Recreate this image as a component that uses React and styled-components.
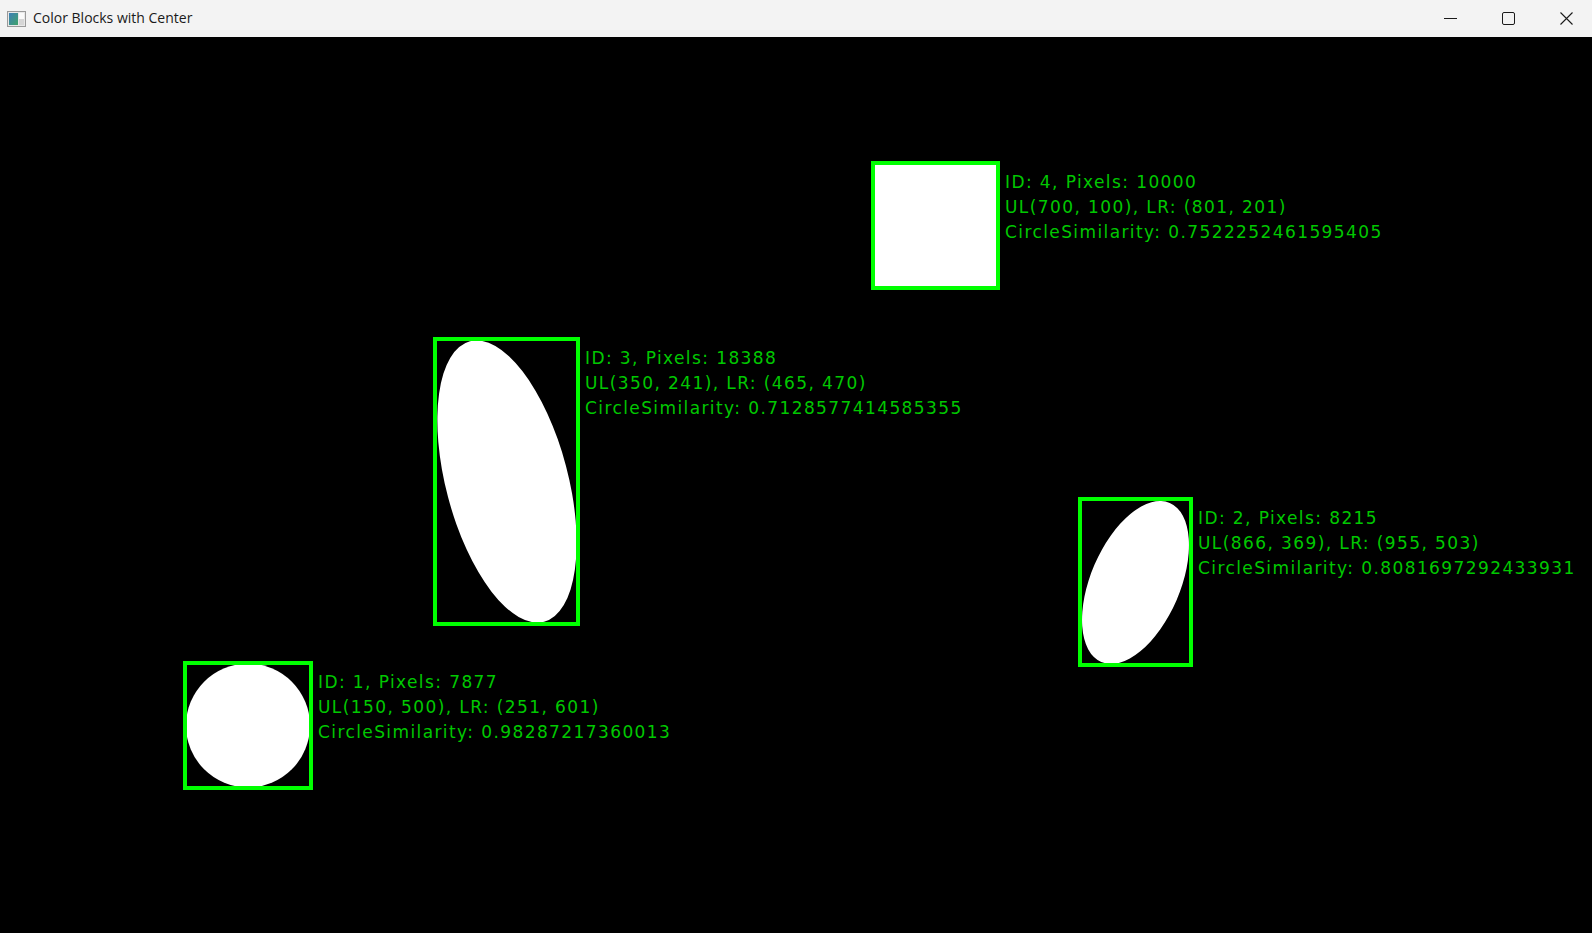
import React from 'react';
import styled, { createGlobalStyle } from 'styled-components';

const GlobalStyle = createGlobalStyle`
  html, body {
    margin: 0;
    padding: 0;
    background: #000;
  }
  #root {
    height: 100vh;
  }
`;

const Window = styled.div`
  display: flex;
  flex-direction: column;
  width: 100vw;
  height: 100vh;
  overflow: hidden;
`;

const TitleBar = styled.div`
  display: flex;
  align-items: center;
  height: 37px;
  flex: 0 0 37px;
  background: #f3f3f3;
  font-family: "Segoe UI", "Open Sans", "Noto Sans", sans-serif;
  font-size: 14px;
  color: #1a1a1a;
`;

const AppIcon = styled.svg`
  margin-left: 7px;
  margin-right: 7px;
  margin-top: 1px;
`;

const Title = styled.span`
  flex: 1;
  padding-bottom: 2px;
`;

const Controls = styled.div`
  display: flex;
  height: 100%;
`;

const ControlButton = styled.div`
  display: flex;
  align-items: center;
  justify-content: center;
  width: ${p => p.$w || 58}px;
  height: 100%;
  padding-left: ${p => p.$shift || 0}px;
  box-sizing: border-box;
`;

const Canvas = styled.div`
  position: relative;
  flex: 1;
  background: #000;
`;

// blob frame: bounding box drawn over the shape, like cv2.rectangle after the fill
const Frame = styled.div`
  position: absolute;
  left: ${p => p.$x}px;
  top: ${p => p.$y}px;
  width: ${p => p.$w}px;
  height: ${p => p.$h}px;
  background: ${p => (p.$filled ? '#fff' : '#000')};

  &::after {
    content: '';
    position: absolute;
    inset: 0;
    border: 4px solid #00ff00;
  }
`;

const Shape = styled.svg`
  position: absolute;
  left: 0;
  top: 0;
`;

const Label = styled.div`
  position: absolute;
  left: calc(100% + 5px);
  top: 9px;
  font-family: "DejaVu Sans", "Liberation Sans", sans-serif;
  font-size: 17px;
  line-height: 25px;
  letter-spacing: 1.4px;
  color: rgb(0, 200, 0);
  white-space: nowrap;
`;

const blobs = [
  {
    id: 4, pixels: 10000, ul: [700, 100], lr: [801, 201], sim: '0.7522252461595405',
    x: 871, y: 124, w: 129, h: 129, kind: 'square',
  },
  {
    id: 3, pixels: 18388, ul: [350, 241], lr: [465, 470], sim: '0.7128577414585355',
    x: 433, y: 300, w: 147, h: 289, kind: 'ellipse',
    cx: 74, cy: 144.5, rx: 61, ry: 145, rot: -14.8,
  },
  {
    id: 2, pixels: 8215, ul: [866, 369], lr: [955, 503], sim: '0.8081697292433931',
    x: 1078, y: 460, w: 115, h: 170, kind: 'ellipse',
    cx: 57.5, cy: 85.5, rx: 44.7, ry: 86.6, rot: 23.3,
  },
  {
    id: 1, pixels: 7877, ul: [150, 500], lr: [251, 601], sim: '0.98287217360013',
    x: 183, y: 624, w: 130, h: 129, kind: 'ellipse',
    cx: 65, cy: 64.5, rx: 62, ry: 62, rot: 0,
  },
];

const Blob = ({ b }) => (
  <Frame $x={b.x} $y={b.y} $w={b.w} $h={b.h} $filled={b.kind === 'square'}>
    {b.kind === 'ellipse' && (
      <Shape width={b.w} height={b.h} viewBox={`0 0 ${b.w} ${b.h}`}>
        <ellipse
          cx={b.cx}
          cy={b.cy}
          rx={b.rx}
          ry={b.ry}
          fill="#fff"
          transform={`rotate(${b.rot} ${b.cx} ${b.cy})`}
        />
      </Shape>
    )}
    <Label>
      <div>ID: {b.id}, Pixels: {b.pixels}</div>
      <div>UL({b.ul[0]}, {b.ul[1]}), LR: ({b.lr[0]}, {b.lr[1]})</div>
      <div>CircleSimilarity: {b.sim}</div>
    </Label>
  </Frame>
);

const App = () => {
  return (
    <>
      <GlobalStyle />
      <Window>
        <TitleBar>
          <AppIcon width="19" height="16" viewBox="0 0 19 16">
            <defs>
              <linearGradient id="ico" x1="0" y1="0" x2="1" y2="1">
                <stop offset="0" stopColor="#3f7fb8" />
                <stop offset="1" stopColor="#3fa36a" />
              </linearGradient>
            </defs>
            <rect x="0.5" y="0.5" width="18" height="15" fill="#e8e8e8" stroke="#9a9a9a" />
            <rect x="2" y="2" width="9" height="12" fill="url(#ico)" />
            <rect x="12" y="2" width="5" height="6" fill="#fafafa" />
            <rect x="12" y="8" width="5" height="6" fill="#d6d6d6" />
          </AppIcon>
          <Title>Color Blocks with Center</Title>
          <Controls>
            <ControlButton>
              <svg width="13" height="13" viewBox="0 0 13 13">
                <line x1="0" y1="6.5" x2="13" y2="6.5" stroke="#1a1a1a" strokeWidth="1" />
              </svg>
            </ControlButton>
            <ControlButton>
              <svg width="13" height="13" viewBox="0 0 13 13">
                <rect x="0.5" y="0.5" width="12" height="12" rx="1.5" fill="none" stroke="#1a1a1a" strokeWidth="1" />
              </svg>
            </ControlButton>
            <ControlButton $w={55} $shift={4}>
              <svg width="13" height="13" viewBox="0 0 13 13">
                <path d="M0.5 0.5 L12.5 12.5 M12.5 0.5 L0.5 12.5" stroke="#1a1a1a" strokeWidth="1.1" />
              </svg>
            </ControlButton>
          </Controls>
        </TitleBar>
        <Canvas>
          {blobs.map(b => (
            <Blob key={b.id} b={b} />
          ))}
        </Canvas>
      </Window>
    </>
  );
};

export default App;
